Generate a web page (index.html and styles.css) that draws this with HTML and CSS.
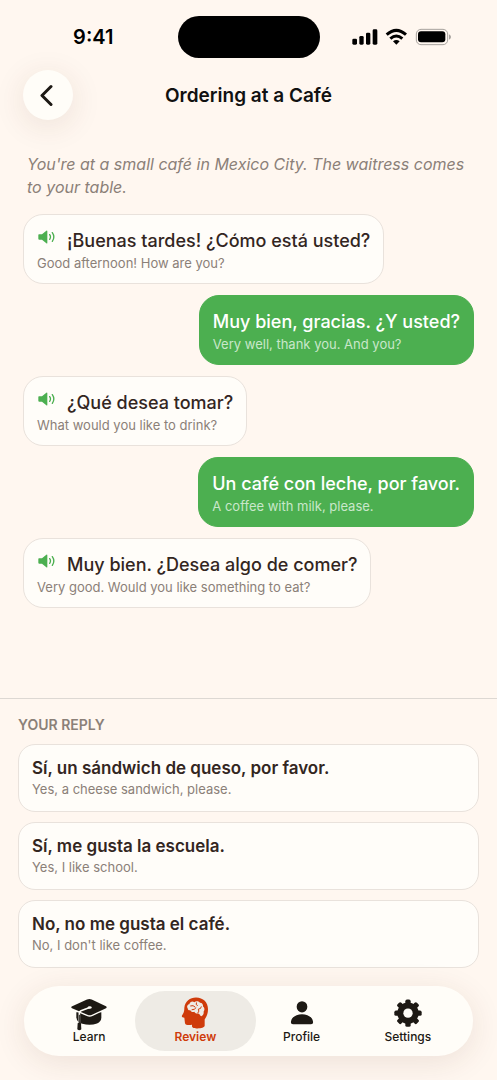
FILE: index.html
```html
<!DOCTYPE html>
<html lang="en">
<head>
<meta charset="utf-8">
<meta name="viewport" content="width=device-width, initial-scale=1">
<title>Ordering at a Café</title>
<link rel="stylesheet" href="styles.css">
</head>
<body>
<svg class="defs" aria-hidden="true">
  <symbol id="speaker" viewBox="0 0 54 42">
    <path fill="currentColor" d="M3 13h9L25 2q3-2 3 2v34q0 4-3 2L12 29H4q-3 0-3-3V15q0-2 2-2z"/>
    <path fill="none" stroke="currentColor" stroke-width="4" stroke-linecap="round" d="M35 14q5 7 0 14M43 8q9 13 0 26"/>
  </symbol>
</svg>
<div class="screen">
  <div class="status">
    <div class="status-side status-time">9:41</div>
    <div class="island"></div>
    <div class="status-side">
      <svg class="status-icons" viewBox="315 84 297 52" aria-hidden="true">
        <rect x="316" y="115" width="14" height="18" rx="4"/>
        <rect x="337" y="107" width="13" height="26" rx="4"/>
        <rect x="357" y="97" width="13" height="36" rx="4"/>
        <rect x="377" y="87" width="14" height="46" rx="4"/>
        <path d="M448 133l-10-10q10-8 20 0z"/>
        <path fill="none" stroke="#000" stroke-width="9" d="M419 103q29-26 58 0M430 115q18-16 36 0"/>
        <rect x="508" y="87" width="94" height="46" rx="14" fill="none" stroke="#a7a29d" stroke-width="3"/>
        <rect x="513" y="93" width="82" height="33" rx="9"/>
        <path fill="#a7a29d" d="M606 102q6 3 6 8t-6 8z"/>
      </svg>
    </div>
  </div>

  <header class="header">
    <button class="back" aria-label="Back">
      <svg viewBox="0 0 16 24" aria-hidden="true"><path d="M11 3.5l-9 9 9 9"/></svg>
    </button>
    <h1 class="title">Ordering at a Café</h1>
  </header>

  <main class="chat">
    <p class="scene">You're at a small café in Mexico City. The waitress comes to your table.</p>
    <div class="bubble">
      <div class="line"><button class="speak" aria-label="Play audio"><svg aria-hidden="true"><use href="#speaker"/></svg></button><span>¡Buenas tardes! ¿Cómo está usted?</span></div>
      <div class="translation">Good afternoon! How are you?</div>
    </div>
    <div class="bubble mine">
      <div class="line">Muy bien, gracias. ¿Y usted?</div>
      <div class="translation">Very well, thank you. And you?</div>
    </div>
    <div class="bubble">
      <div class="line"><button class="speak" aria-label="Play audio"><svg aria-hidden="true"><use href="#speaker"/></svg></button><span>¿Qué desea tomar?</span></div>
      <div class="translation">What would you like to drink?</div>
    </div>
    <div class="bubble mine">
      <div class="line">Un café con leche, por favor.</div>
      <div class="translation">A coffee with milk, please.</div>
    </div>
    <div class="bubble">
      <div class="line"><button class="speak" aria-label="Play audio"><svg aria-hidden="true"><use href="#speaker"/></svg></button><span>Muy bien. ¿Desea algo de comer?</span></div>
      <div class="translation">Very good. Would you like something to eat?</div>
    </div>
  </main>

  <section class="replies">
    <h2 class="label">YOUR REPLY</h2>
    <button class="reply"><span class="reply-text">Sí, un sándwich de queso, por favor.</span><span class="translation">Yes, a cheese sandwich, please.</span></button>
    <button class="reply"><span class="reply-text">Sí, me gusta la escuela.</span><span class="translation">Yes, I like school.</span></button>
    <button class="reply"><span class="reply-text">No, no me gusta el café.</span><span class="translation">No, I don't like coffee.</span></button>
  </section>

  <nav class="tabs">
    <button class="tab">
      <svg viewBox="182 82 108 104" aria-hidden="true">
        <path d="M198 130v16q2 15 18 19 24 6 44-1 13-6 13-18v-16z"/>
        <path class="outlined" d="M184 113l46-21q7-3 14 0l43 20q4 3 0 6l-42 20q-7 3-14 0l-46-20q-4-2-1-5z"/>
        <path class="cut" d="M238 116l-26 10q-5 2-5 8v30"/>
        <ellipse class="cut-fill" cx="238" cy="116" rx="6" ry="4"/>
        <path class="cord" d="M207 138v26"/>
        <path d="M202 163q5-4 10 0l1 18q-6 6-12 0z"/>
      </svg>
      <span>Learn</span>
    </button>
    <button class="tab active" aria-current="page">
      <svg viewBox="502 78 108 104" aria-hidden="true">
        <path d="M524 113c2-20 17-31 35-31 22 0 36 15 36 35 0 15-5 23-10 31v19c0 9-38 11-38 1v-4c-9 1-19 2-21-5l-2-16c-5-1-9-2-7-7 4-6 7-10 7-23z"/>
        <path class="brain" d="M534 114c-4-7 1-12 5-12 2-8 10-10 15-6 5-5 15-3 17 2 7 0 10 6 9 11 6 4 5 12 2 15 1 8-2 12-7 14-4-1-5-7-9-8-7 1-10-1-12-5-7 2-10-1-12-5-5 1-8-2-8-6z"/>
        <path class="groove" d="M543 107q8-3 13 3M560 98q-3 7 3 8M547 119q8 0 12-6M565 128q5-5 1-11 8 0 9-7"/>
      </svg>
      <span>Review</span>
    </button>
    <button class="tab">
      <svg viewBox="100 80 108 104" aria-hidden="true">
        <ellipse cx="154" cy="112" rx="16" ry="17"/>
        <path d="M121 156c2-14 17-22 33-22s31 8 33 22c1 6-2 8-6 8h-54c-4 0-7-2-6-8z"/>
      </svg>
      <span>Profile</span>
    </button>
    <button class="tab">
      <svg viewBox="-54 -51 108 104" aria-hidden="true">
        <g id="teeth"><rect x="-8" y="-41" width="16" height="82" rx="5"/><rect x="-41" y="-8" width="82" height="16" rx="5"/></g>
        <use href="#teeth" transform="rotate(45)"/>
        <circle r="32"/>
        <circle class="cut-fill" r="14"/>
      </svg>
      <span>Settings</span>
    </button>
  </nav>
</div>
</body>
</html>
```
FILE: styles.css
```css
* { box-sizing: border-box; }

body {
  margin: 0;
  background: #fff7f0;
  color: #33261f;
  font-family: Inter, "Liberation Sans", sans-serif;
}

button {
  margin: 0;
  padding: 0;
  border: 0;
  background: none;
  color: inherit;
  font: inherit;
  cursor: pointer;
}

.defs { display: none; }

.screen {
  display: flex;
  flex-direction: column;
  min-height: 100vh;
  padding-bottom: 24px;
}

.status {
  display: grid;
  grid-template-columns: 1fr auto 1fr;
  align-items: center;
  padding-top: 16px;
}

.status-side {
  display: flex;
  justify-content: center;
  color: #000;
}

.status-time {
  font-size: 20px;
  font-weight: 600;
  padding-left: 9px;
}

.status-icons { width: 99px; height: 18px; margin-right: 14px; }

.island {
  width: 142px;
  height: 42px;
  border-radius: 21px;
  background: #000;
}

.header {
  display: grid;
  grid-template-columns: 50px 1fr 50px;
  align-items: center;
  padding: 12px 23px 0;
}

.back {
  display: flex;
  align-items: center;
  justify-content: center;
  width: 50px;
  height: 50px;
  border-radius: 50%;
  background: #fffdf8;
  box-shadow: 0 6px 32px rgba(90, 50, 30, 0.11);
}

.back svg {
  width: 16px;
  height: 24px;
  fill: none;
  stroke: #1d1914;
  stroke-width: 3;
  stroke-linecap: round;
  stroke-linejoin: round;
}

.title {
  margin: 0;
  text-align: center;
  font-size: 19px;
  font-weight: 600;
  color: #111;
}

.chat {
  flex: 1;
  display: flex;
  flex-direction: column;
  align-items: flex-start;
  gap: 11px;
  padding: 33px 23px 24px;
}

.scene {
  margin: 0;
  padding: 0 4px 4px;
  font-size: 16px;
  line-height: 23px;
  font-style: italic;
  color: #8b8078;
}

.bubble {
  padding: 12px 13px 11px;
  border: 1px solid #e9e2dc;
  border-radius: 20px;
  background: #fffdf9;
}

.mine {
  align-self: flex-end;
  border-color: #4caf50;
  background: #4caf50;
  color: #fff;
}

.line {
  display: flex;
  gap: 10px;
  font-size: 18px;
  line-height: 27px;
  font-weight: 500;
}

.speak {
  display: flex;
  width: 20px;
  height: 20px;
  align-items: center;
  justify-content: center;
  color: #4caf50;
}

.speak svg { width: 18px; height: 14px; }

.translation {
  font-size: 13px;
  line-height: 18px;
  font-weight: 400;
  color: #8b8078;
}

.mine .translation { color: #c9e7ca; }

.replies {
  display: flex;
  flex-direction: column;
  gap: 10px;
  padding: 17px 18px 18px;
  border-top: 1px solid #ddd8d3;
}

.label {
  margin: 0;
  font-size: 14px;
  line-height: 18px;
  font-weight: 600;
  color: #8b8078;
}

.reply {
  display: flex;
  flex-direction: column;
  padding: 11px 13px 13px;
  border: 1px solid #e9e2dc;
  border-radius: 17px;
  background: #fffdf9;
  text-align: left;
}

.reply-text {
  font-size: 17px;
  line-height: 24px;
  font-weight: 600;
}

.tabs {
  display: grid;
  grid-template-columns: repeat(4, 1fr);
  margin: 0 24px;
  padding: 5px 12px;
  border-radius: 35px;
  background: #fffdf8;
  box-shadow: 0 6px 32px rgba(90, 50, 30, 0.11);
}

.tab {
  position: relative;
  display: flex;
  flex-direction: column;
  align-items: center;
  height: 60px;
  padding-top: 5px;
  color: #1d1914;
  font-size: 12px;
  line-height: 12px;
  font-weight: 500;
}

.tab svg {
  position: relative;
  width: 36px;
  height: 35px;
  fill: currentColor;
}

.tab span { position: relative; }

.active { color: #cf3b0b; font-weight: 600; }

.active::before {
  content: "";
  position: absolute;
  inset: 0 -7px;
  border-radius: 30px;
  background: #eeebe5;
}

.tab .cut { fill: none; stroke: #fffdf8; stroke-width: 5; }
.tab .cut-fill { fill: #fffdf8; }
.tab .outlined { stroke: #fffdf8; stroke-width: 8; paint-order: stroke; }
.tab .cord { fill: none; stroke: #1d1914; stroke-width: 3; }
.tab .brain { fill: #eeebe5; }
.tab .groove { fill: none; stroke: currentColor; stroke-width: 3; stroke-linecap: round; }
```
